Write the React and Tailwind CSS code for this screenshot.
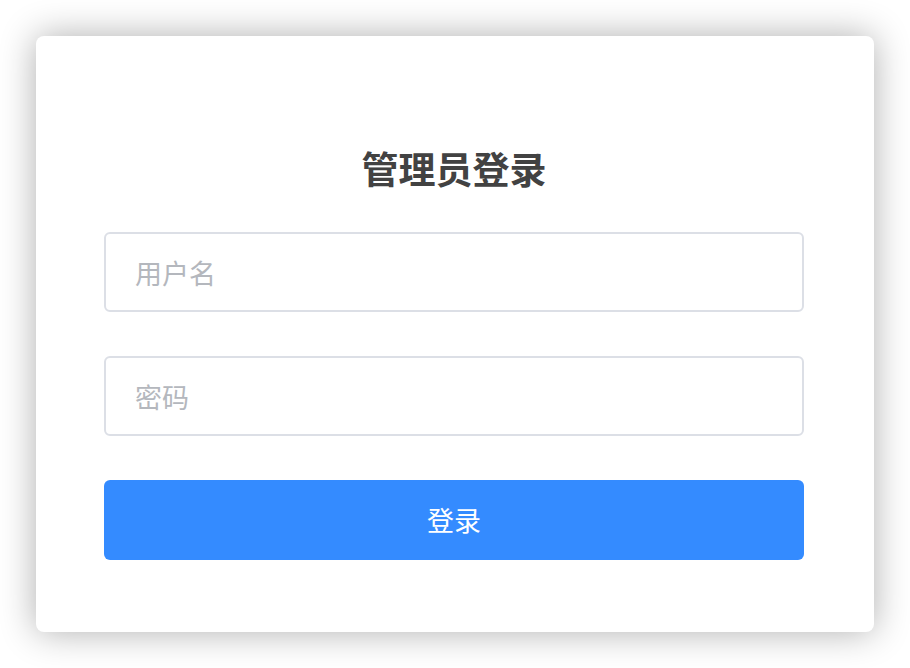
import React, { useState } from "react";

const font = { fontFamily: '"Noto Sans CJK SC", "Noto Sans", sans-serif' };

const Field = ({ placeholder, type = "text", value, onChange }) => (
  <input
    type={type}
    value={value}
    onChange={onChange}
    placeholder={placeholder}
    className="w-full h-[80px] rounded-[6px] border-2 border-[#dcdfe6] bg-white pl-[29px] pr-4 text-[27px] text-[#333] placeholder:text-[#b4b7bd] outline-none focus:border-[#348bff]"
    style={font}
  />
);

export default function App() {
  const [user, setUser] = useState("");
  const [pwd, setPwd] = useState("");

  return (
    <div className="w-[910px] h-[668px] bg-white p-[36px]" style={font}>
      <div className="h-full w-full rounded-[8px] bg-white shadow-[0_0_36px_rgba(0,0,0,0.32)] pt-[114px] pl-[68px] pr-[70px] flex flex-col">
        <h1 className="text-center text-[37px] leading-[37px] font-bold text-[#424242] mb-[45px]">
          管理员登录
        </h1>
        <div className="flex flex-col gap-[44px]">
          <Field placeholder="用户名" value={user} onChange={(e) => setUser(e.target.value)} />
          <Field placeholder="密码" type="password" value={pwd} onChange={(e) => setPwd(e.target.value)} />
          <button className="w-full h-[80px] rounded-[6px] bg-[#348bff] text-white text-[27px]">
            登录
          </button>
        </div>
      </div>
    </div>
  );
}
